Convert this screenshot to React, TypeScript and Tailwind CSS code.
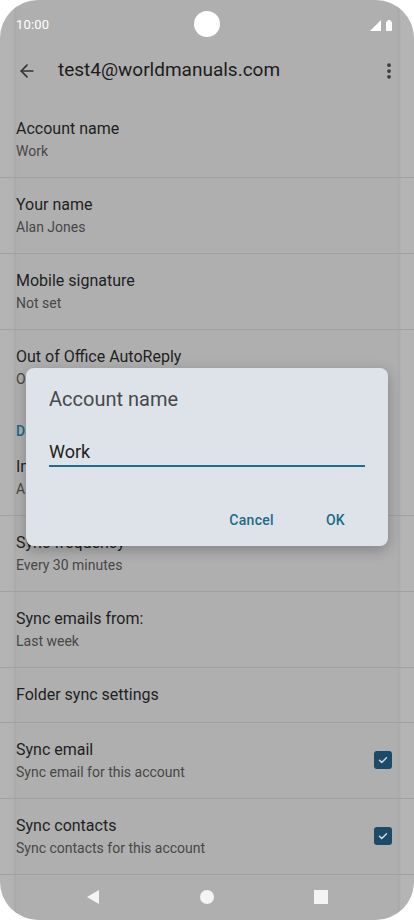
import { ArrowLeft, MoreVertical } from 'lucide-react';

const rows = [
  { title: 'Account name', sub: 'Work' },
  { title: 'Your name', sub: 'Alan Jones' },
  { title: 'Mobile signature', sub: 'Not set' },
  { title: 'Out of Office AutoReply', sub: 'Off', noBorder: true },
];

const rows2 = [
  { title: 'Images', sub: 'Ask before showing external images' },
  { title: 'Sync frequency', sub: 'Every 30 minutes' },
  { title: 'Sync emails from:', sub: 'Last week' },
];

const Checkbox = () => (
  <div className="w-[18px] h-[18px] rounded-[3px] bg-[#1d4a66] flex items-center justify-center">
    <svg width="12" height="12" viewBox="0 0 24 24" fill="none" stroke="#cfd9de" strokeWidth="3" strokeLinecap="round" strokeLinejoin="round">
      <path d="M5 12.5l4.5 4.5L19 7.5" />
    </svg>
  </div>
);

const Row = ({ title, sub, noBorder }: { title: string; sub: string; noBorder?: boolean }) => (
  <div className={`h-[76px] flex flex-col justify-center px-4 ${noBorder ? '' : 'border-b border-[#a1a1a1]'}`}>
    <div className="text-[16px] leading-[22px] text-[#1f1f1f]">{title}</div>
    <div className="text-[14px] leading-[20px] text-[#474747] mt-[1px]">{sub}</div>
  </div>
);

const CheckRow = ({ title, sub }: { title: string; sub: string }) => (
  <div className="h-[76px] flex items-center justify-between pl-4 pr-[22px] border-b border-[#a1a1a1]">
    <div className="flex flex-col">
      <div className="text-[16px] leading-[22px] text-[#1f1f1f]">{title}</div>
      <div className="text-[14px] leading-[20px] text-[#474747] mt-[1px]">{sub}</div>
    </div>
    <Checkbox />
  </div>
);

export default function App() {
  return (
    <div className="w-[414px] h-[920px] bg-white font-['Roboto',sans-serif]">
      <div className="relative h-full rounded-[38px] overflow-hidden bg-[linear-gradient(to_right,#b4b4b4_0px,#b3b3b3_13px,#a9a9a9_15px,#afafaf_17px,#afafaf_397px,#a9a9a9_399px,#b4b4b4_401px)] flex flex-col">
        {/* status bar */}
        <div className="h-[48px] flex items-center justify-between px-4 pt-[3px] relative">
          <span className="text-[13px] text-white tracking-[0.2px]">10:00</span>
          <div className="absolute left-[194px] top-[11px] w-[26px] h-[26px] rounded-full bg-white" />
          <div className="flex items-center gap-[5px] mr-[6px]">
            <svg width="11" height="11" viewBox="0 0 11 11">
              <path d="M11 0V11H0Z" fill="#fff" />
            </svg>
            <svg width="6" height="11" viewBox="0 0 6 11">
              <rect x="0" y="1.5" width="6" height="9.5" rx="0.8" fill="#fff" />
              <rect x="1.5" y="0" width="3" height="2" fill="#fff" />
            </svg>
          </div>
        </div>

        {/* header */}
        <div className="h-[46px] flex items-center pl-[17px] pr-[16px] pt-[1px]">
          <ArrowLeft size={20} color="#333333" strokeWidth={2} />
          <div className="ml-[21px] text-[19px] text-[#1c1c1c] flex-1">test4@worldmanuals.com</div>
          <MoreVertical size={20} color="#3a3a3a" strokeWidth={2.5} className="-mr-[1px]" />
        </div>

        <div className="pt-[9px]">
          {rows.map((r) => (
            <Row key={r.title} {...r} />
          ))}
          <div className="h-[34px] flex items-end px-4">
            <span className="text-[14px] leading-[18px] text-[#1d6a88] font-medium">Data usage</span>
          </div>
          {rows2.map((r) => (
            <Row key={r.title} {...r} />
          ))}
          <div className="h-[55px] flex items-center px-4 border-b border-[#a1a1a1]">
            <span className="text-[16px] text-[#1f1f1f]">Folder sync settings</span>
          </div>
          <CheckRow title="Sync email" sub="Sync email for this account" />
          <CheckRow title="Sync contacts" sub="Sync contacts for this account" />
        </div>

        {/* nav bar */}
        <div className="h-[46px] flex items-center justify-between px-[86px]">
          <svg width="14" height="16" viewBox="0 0 14 16">
            <path d="M13 1V15L1 8Z" fill="#f4f4f4" />
          </svg>
          <div className="w-[14px] h-[14px] rounded-full bg-[#f4f4f4]" />
          <div className="w-[14px] h-[14px] bg-[#f4f4f4]" />
        </div>

        {/* dialog */}
        <div className="absolute left-[26px] top-[368px] w-[362px] h-[178px] rounded-[8px] bg-[#dee3e9] shadow-[0_4px_14px_rgba(0,0,0,0.25)] px-[23px] pt-[17px]">
          <div className="text-[20px] leading-[28px] text-[#46494c]">Account name</div>
          <div className="mt-[27px] text-[18px] leading-[24px] text-[#222] border-b-2 border-[#1f6e8e] pb-[1px]">
            Work
          </div>
          <div className="flex justify-end gap-[52px] mt-[43px] pr-[20px]">
            <span className="text-[14px] font-medium text-[#1d6a88] tracking-[0.3px]">Cancel</span>
            <span className="text-[14px] font-medium text-[#1d6a88] tracking-[0.3px]">OK</span>
          </div>
        </div>
      </div>
    </div>
  );
}
